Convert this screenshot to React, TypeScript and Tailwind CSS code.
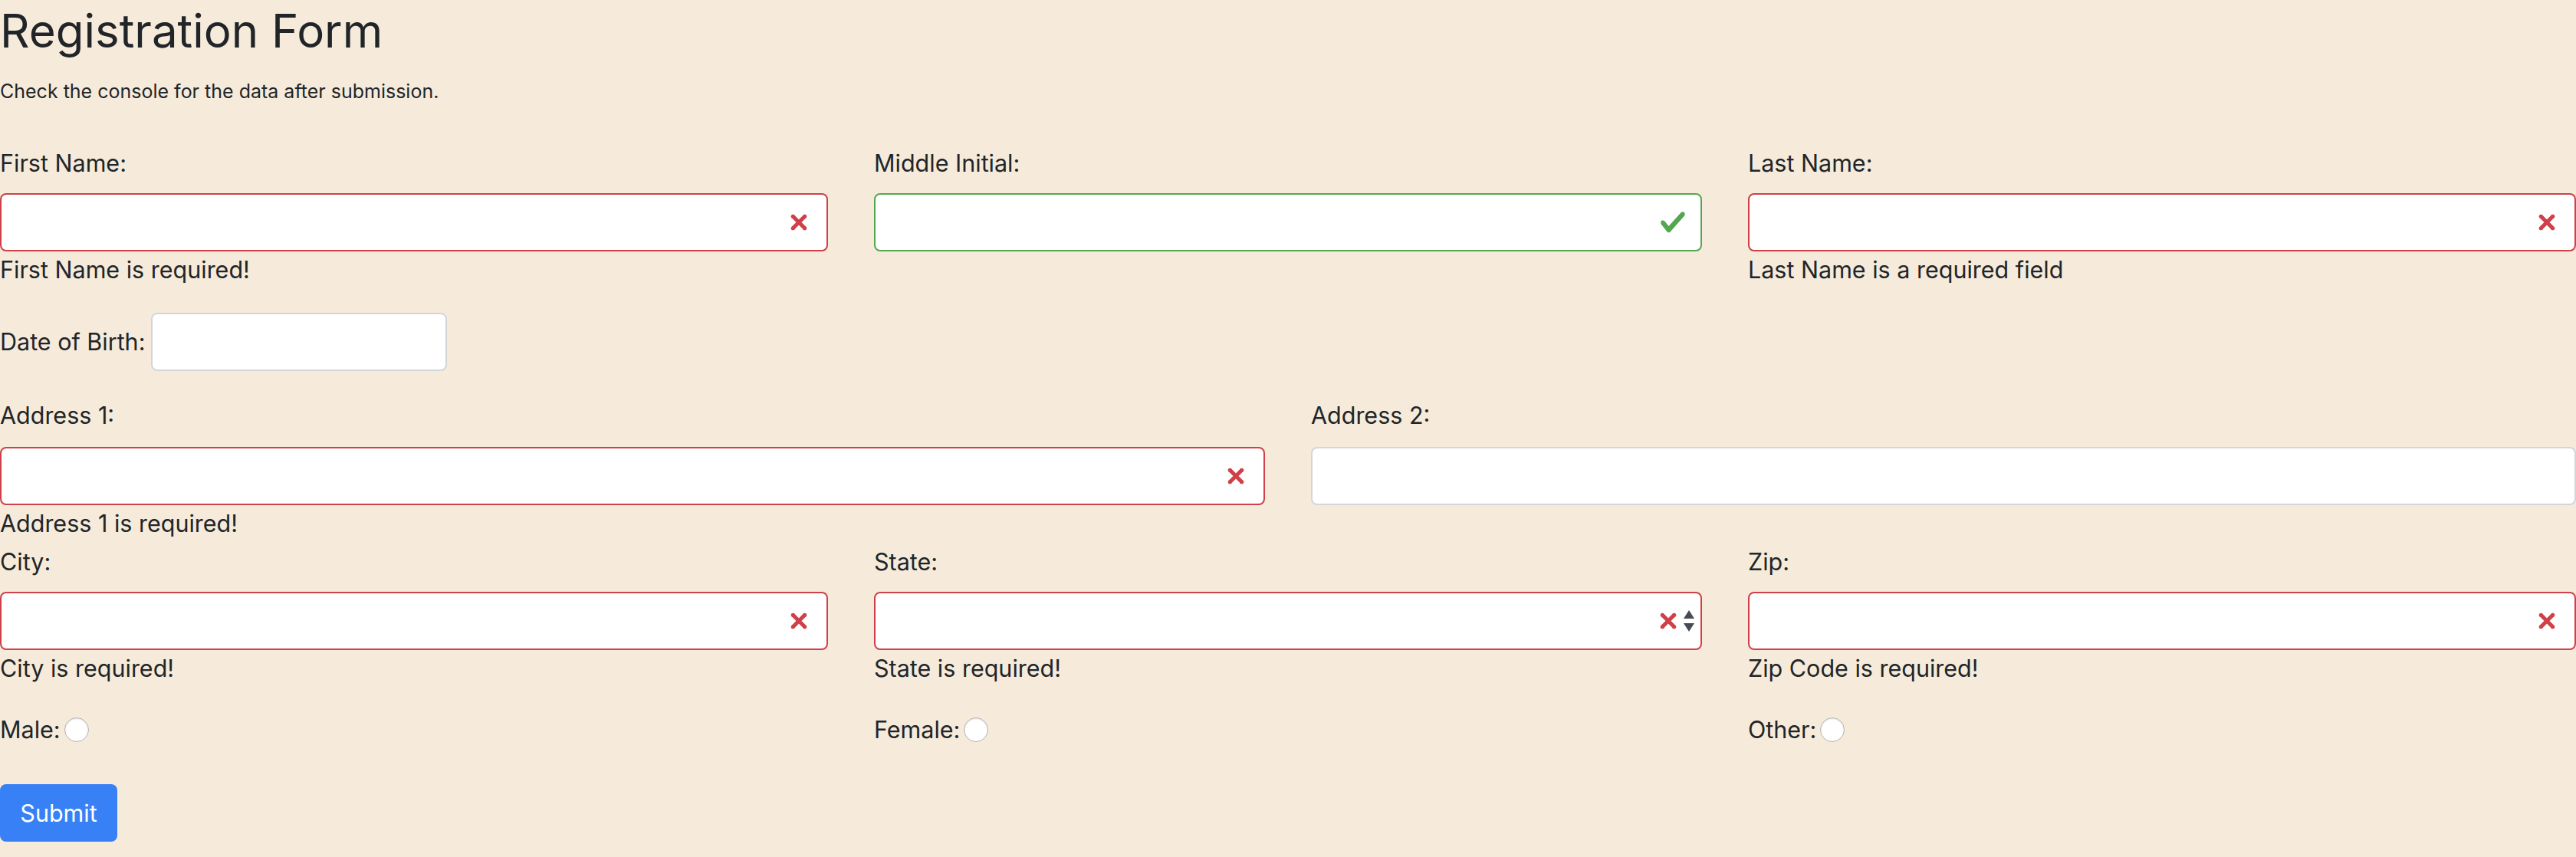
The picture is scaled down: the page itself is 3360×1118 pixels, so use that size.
import type { ReactNode } from 'react';

type Status = 'invalid' | 'valid' | 'none';

function InvalidIcon() {
  return (
    <svg viewBox="-2 -2 7 7" className="h-[36px] w-[36px]" fill="#cf4048">
      <path stroke="#cf4048" d="M0 0l3 3m0-3L0 3" />
      <circle r=".5" />
      <circle cx="3" r=".5" />
      <circle cy="3" r=".5" />
      <circle cx="3" cy="3" r=".5" />
    </svg>
  );
}

function ValidIcon() {
  return (
    <svg viewBox="0 0 8 8" className="h-[36px] w-[36px]">
      <path
        fill="#55a651"
        d="M2.3 6.73L.6 4.53c-.4-1.04.46-1.4 1.1-.8l1.1 1.4 3.4-3.8c.6-.63 1.6-.27 1.2.7l-4 4.6c-.43.5-.8.4-1.1.1z"
      />
    </svg>
  );
}

function SelectArrows() {
  return (
    <svg viewBox="0 0 14 28" className="h-[28px] w-[14px]" fill="#474c54">
      <polygon points="7,0 0,11 14,11" />
      <polygon points="0,17 14,17 7,28" />
    </svg>
  );
}

function Box({ status, select }: { status: Status; select?: boolean }) {
  const border =
    status === 'invalid'
      ? 'border-[#cf4048]'
      : status === 'valid'
        ? 'border-[#55a651]'
        : 'border-[#d1d6db]';

  return (
    <div className={`relative h-[76px] w-full rounded-[8px] border-2 bg-white ${border}`}>
      {select ? (
        <div className="absolute inset-y-0 right-[8px] flex items-center gap-[2px]">
          <InvalidIcon />
          <SelectArrows />
        </div>
      ) : (
        status !== 'none' && (
          <div className="absolute inset-y-0 right-[18px] flex items-center">
            {status === 'invalid' ? <InvalidIcon /> : <ValidIcon />}
          </div>
        )
      )}
    </div>
  );
}

function Field({
  label,
  status,
  error,
  select,
  gap = 'mb-[15px]',
}: {
  label: string;
  status: Status;
  error?: string;
  select?: boolean;
  gap?: string;
}) {
  return (
    <div className="flex flex-col">
      <label className={`${gap} block leading-[48px]`}>{label}</label>
      <Box status={status} select={select} />
      {error && <div className="leading-[48px]">{error}</div>}
    </div>
  );
}

function Radio({ label }: { label: ReactNode }) {
  return (
    <label className="flex items-center leading-[48px]">
      {label}
      <span className="ml-[5px] inline-block h-[32px] w-[32px] rounded-full border border-[#b3b3b3] bg-white shadow-[inset_0_1px_2px_rgba(0,0,0,0.12)]" />
    </label>
  );
}

export default function App() {
  return (
    <div className="min-h-screen bg-[#f6ebda] font-['Inter',sans-serif] text-[30.5px] text-[#212529]">
      <h1 className="text-[60px] font-normal leading-[80px]">Registration Form</h1>
      <p className="mt-[21px] text-[25px] leading-[36px]">
        Check the console for the data after submission.
      </p>

      <form className="mt-[52px]">
        <div className="mb-[32px] grid grid-cols-3 gap-x-[60px]">
          <Field label="First Name:" status="invalid" error="First Name is required!" />
          <Field label="Middle Initial:" status="valid" />
          <Field label="Last Name:" status="invalid" error="Last Name is a required field" />
        </div>

        <div className="mb-[34px] flex items-center">
          <label className="leading-[48px]">Date of Birth:</label>
          <div className="ml-[8px] h-[76px] w-[386px] rounded-[8px] border-2 border-[#d1d6db] bg-white" />
        </div>

        <div className="grid grid-cols-2 gap-x-[60px]">
          <Field label="Address 1:" status="invalid" error="Address 1 is required!" gap="mb-[17px]" />
          <Field label="Address 2:" status="none" gap="mb-[17px]" />
        </div>

        <div className="mb-[32px] mt-[2px] grid grid-cols-3 gap-x-[60px]">
          <Field label="City:" status="invalid" error="City is required!" />
          <Field label="State:" status="invalid" error="State is required!" select />
          <Field label="Zip:" status="invalid" error="Zip Code is required!" />
        </div>

        <div className="grid grid-cols-3 gap-x-[60px]">
          <Radio label="Male:" />
          <Radio label="Female:" />
          <Radio label="Other:" />
        </div>

        <button
          type="button"
          className="mt-[47px] h-[75px] w-[153px] rounded-[8px] bg-[#3880f6] text-[30.5px] text-white"
        >
          Submit
        </button>
      </form>
    </div>
  );
}
